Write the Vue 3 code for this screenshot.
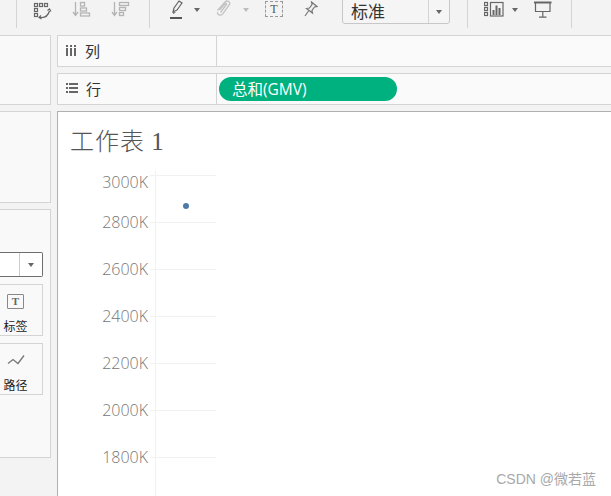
<script setup>
const ticks = ['3000K', '2800K', '2600K', '2400K', '2200K', '2000K', '1800K']
</script>

<template>
  <div class="page">
    <header class="toolbar">
      <span class="sep" style="left:16px"></span>
      <svg class="ic" style="left:33px;top:1px" width="19" height="19" viewBox="0 0 19 19" fill="none" stroke="#666" stroke-width="1.2">
        <rect x="1.5" y="2.5" width="3" height="3" /><rect x="6.5" y="2.5" width="3" height="3" /><rect x="11.5" y="2.5" width="3" height="3" />
        <rect x="1.5" y="7.5" width="3" height="3" /><rect x="1.5" y="12.5" width="3" height="3" />
        <path d="M7 16.5c4 .5 8-1.500 9.500-6.500" stroke-width="1.300" />
        <path d="M14.500 9.500l2-1.500 1.500 2.500M8 14.500l-2 2 2.500 1.500" />
      </svg>
      <svg class="ic" style="left:72px;top:1px" width="20" height="16" viewBox="0 0 20 16" fill="none" stroke="#b4b4b4" stroke-width="1.300">
        <path d="M3.500 1v13M1 11l2.500 3.500L6 11" /><rect x="8.500" y="1.500" width="4" height="3.500" /><rect x="8.500" y="7" width="6" height="3" /><rect x="8.500" y="12" width="9" height="3" />
      </svg>
      <svg class="ic" style="left:111px;top:1px" width="20" height="16" viewBox="0 0 20 16" fill="none" stroke="#b4b4b4" stroke-width="1.300">
        <path d="M3.500 1v13M1 11l2.500 3.500L6 11" /><rect x="8.500" y="1.500" width="9" height="3" /><rect x="8.500" y="6.500" width="6" height="3" /><rect x="8.500" y="11.500" width="4" height="3" />
      </svg>
      <span class="sep" style="left:149px"></span>
      <svg class="ic" style="left:170px;top:0" width="14" height="19" viewBox="0 0 14 19" fill="none">
        <path d="M3 12l1-4 5-7 3 2-5 7z" stroke="#666" stroke-width="1.200" /><path d="M3 12l3 .5-3 1.500z" fill="#666" />
        <rect x="0" y="17" width="12" height="2" fill="#555" />
      </svg>
      <span class="caret" style="left:194px;top:8px"></span>
      <svg class="ic" style="left:216px;top:0" width="17" height="17" viewBox="0 0 17 17" fill="none" stroke="#c2c2c2" stroke-width="1.300">
        <path d="M1.500 10.500L9 2c2-2 5.500-.5 4.500 2.500L7 13.500c-1.500 2.500-6 2-5.500-1.500" />
        <path d="M4.500 12.500l6-8c.5-1-.5-1.500-1.200-1L3.500 10" />
      </svg>
      <span class="caret light" style="left:243px;top:8px"></span>
      <div class="tbox" style="left:265px;top:1px">T</div>
      <svg class="ic" style="left:304px;top:1px" width="14" height="16" viewBox="0 0 14 16" fill="none" stroke="#777" stroke-width="1.200">
        <path d="M7.500 1l5.500 4.500-2.500.5-2.500 3.500.5 2.500-6-4.500 3-.5 2.500-3.500zM4.500 10L1 15" />
      </svg>
      <div class="select">
        <span class="sel-text">标准</span>
        <span class="sel-btn"><i class="caret static"></i></span>
      </div>
      <span class="sep" style="left:467px"></span>
      <svg class="ic" style="left:484px;top:1px" width="20" height="16" viewBox="0 0 20 16" fill="none" stroke="#666" stroke-width="1.200">
        <rect x=".5" y="1.500" width="3" height="3" /><rect x=".5" y="6.500" width="3" height="3" /><rect x=".5" y="11.500" width="3" height="3" />
        <rect x="6.500" y="1.500" width="12.500" height="13.500" />
        <path d="M9.500 14V9M12.500 14V4.500M15.500 14V7" stroke-width="2" />
      </svg>
      <span class="caret" style="left:512px;top:8px"></span>
      <svg class="ic" style="left:534px;top:1px" width="18" height="17" viewBox="0 0 18 17" fill="none" stroke="#666" stroke-width="1.200">
        <path d="M0 1.500h17.500" stroke-width="2" /><path d="M1.500 2v8.500h14.500V2M8.800 10.500v5M5 16.200h7.500" />
      </svg>
      <span class="sep" style="left:571px"></span>
    </header>

    <div class="body">
      <aside class="side">
        <div class="card first"></div>
        <div class="card second"></div>
        <div class="card third">
          <div class="combo"><span class="combo-btn"><i class="caret static"></i></span></div>
          <div class="mark">
            <div class="t-icon">T</div>
            <span>标签</span>
          </div>
          <div class="mark">
            <svg width="18" height="12" viewBox="0 0 18 12" fill="none" stroke="#777" stroke-width="1.300">
              <path d="M1 9l5-4 5 4 6-8" />
            </svg>
            <span>路径</span>
          </div>
        </div>
      </aside>

      <main class="main">
        <div class="shelf">
          <div class="shelf-label">
            <svg width="11" height="11" viewBox="0 0 11 11" fill="#666"><rect x="0" y="3" width="2" height="8" /><rect x="4" y="3" width="2" height="8" /><rect x="8" y="3" width="2" height="8" /><rect x="0" y="0" width="2" height="2" /><rect x="4" y="0" width="2" height="2" /><rect x="8" y="0" width="2" height="2" /></svg>
            <span>列</span>
          </div>
          <div class="shelf-drop"></div>
        </div>
        <div class="shelf">
          <div class="shelf-label">
            <svg width="12" height="11" viewBox="0 0 12 11" fill="#666"><rect x="0" y="0" width="2" height="2" /><rect x="3" y="0" width="9" height="2" /><rect x="0" y="4" width="2" height="2" /><rect x="3" y="4" width="9" height="2" /><rect x="0" y="8" width="2" height="2" /><rect x="3" y="8" width="9" height="2" /></svg>
            <span>行</span>
          </div>
          <div class="shelf-drop"><div class="pill">总和(GMV)</div></div>
        </div>

        <section class="sheet">
          <h1 class="title">工作表 <span class="num">1</span></h1>
          <div class="chart">
            <div v-for="t in ticks" :key="t" class="tick">
              <span class="tick-label">{{ t }}</span>
              <span class="tick-line"></span>
            </div>
            <span class="axis"></span>
            <span class="dot"></span>
          </div>
          <div class="mark-wm">CSDN @微若蓝</div>
        </section>
      </main>
    </div>
  </div>
</template>

<style>
html, body { margin: 0; padding: 0; background: #f3f3f3; overflow: hidden; }
</style>

<style scoped>
.page {
  width: 611px;
  height: 496px;
  overflow: hidden;
  background: #f3f3f3;
  font-family: "Open Sans", "Noto Sans CJK SC", sans-serif;
  color: #333;
}
.toolbar { position: relative; height: 35px; }
.sep { position: absolute; top: 0; width: 1px; height: 28px; background: #d4d4d4; }
.ic { position: absolute; }
.caret {
  position: absolute;
  width: 0; height: 0;
  border-left: 3.500px solid transparent;
  border-right: 3.500px solid transparent;
  border-top: 4px solid #666;
}
.caret.light { border-top-color: #bdbdbd; }
.caret.static { position: static; display: block; }
.tbox {
  position: absolute;
  width: 16px; height: 14px;
  border: 1px dashed #999;
  font: 12px/14px "Liberation Serif", serif;
  color: #555;
  text-align: center;
}
.select {
  position: absolute;
  left: 342px; top: -4px;
  width: 106px; height: 26px;
  display: flex;
  border: 1px solid #c8c8c8;
  border-radius: 3px;
  background: #f5f5f5;
}
.sel-text { flex: 1; padding-left: 8px; font-size: 17px; line-height: 29px; color: #333; }
.sel-btn { width: 21px; border-left: 1px solid #d4d4d4; display: flex; align-items: center; justify-content: center; padding-top: 4px; box-sizing: border-box; }

.body { display: flex; gap: 6px; height: 461px; }
.side { width: 51px; flex: none; display: flex; flex-direction: column; gap: 6px; }
.card { background: #f9f9f9; border: 1px solid #d4d4d4; border-left: none; box-sizing: border-box; }
.first { height: 70px; }
.second { height: 92px; }
.third {
  height: 249px;
  padding: 42px 7px 0 0;
  display: flex;
  flex-direction: column;
  align-items: stretch;
  gap: 7px;
}
.combo {
  height: 25px;
  flex: none;
  box-sizing: border-box;
  border: 1px solid #6e6e6e;
  border-left: none;
  border-radius: 0 2px 2px 0;
  background: #fff;
  display: flex;
  justify-content: flex-end;
}
.combo-btn { width: 22px; border-left: 1px solid #ccc; display: flex; align-items: center; justify-content: center; }
.mark {
  height: 52px;
  flex: none;
  margin-left: -11px;
  box-sizing: border-box;
  border: 1px solid #d4d4d4;
  border-left: none;
  padding: 9px 0 0;
  display: flex;
  flex-direction: column;
  align-items: center;
  font-size: 12px;
  color: #222;
}
.mark span { line-height: 16px; margin-top: auto; }
.mark svg { height: 15px; }
.t-icon {
  width: 15px; height: 13px;
  border: 1.500px solid #888;
  border-radius: 1px;
  font: bold 11px/13px "Liberation Serif", serif;
  color: #666;
  text-align: center;
}

.main { flex: 1; min-width: 0; display: flex; flex-direction: column; gap: 6px; }
.shelf { height: 32px; flex: none; display: flex; background: #fafafa; border: 1px solid #d4d4d4; border-right: none; box-sizing: border-box; }
.shelf-label { width: 159px; flex: none; box-sizing: border-box; border-right: 1px solid #d4d4d4; display: flex; align-items: center; gap: 8px; padding: 0 0 2px 8px; font-size: 15px; color: #333; }
.shelf-drop { flex: 1; display: flex; align-items: center; padding-left: 2px; }
.pill {
  width: 178px; height: 24px;
  border-radius: 12px;
  background: #00b180;
  color: #fff;
  font-size: 15.500px;
  line-height: 24px;
  padding-left: 13px;
  box-sizing: border-box;
}
.sheet {
  flex: 1;
  position: relative;
  background: #fff;
  border: 1px solid #b0b0b0;
  border-right: none;
  border-bottom: none;
  padding: 11px 0 0 12px;
  box-sizing: border-box;
}
.title { margin: 0; font-weight: 300; font-size: 24px; line-height: 34px; color: #555; letter-spacing: 1px; font-family: "Noto Sans CJK SC", sans-serif; }
.num { font-family: "Liberation Serif", serif; font-size: 25px; }
.chart { position: relative; margin: 16px 0 0 -12px; }
.tick { height: 47px; display: flex; align-items: flex-start; }
.tick-label { width: 90px; text-align: right; font-size: 16px; font-weight: 300; line-height: 14px; margin-top: -7px; color: #777; }
.tick:first-child .tick-label { margin-top: 0; }
.tick-line { width: 66px; height: 1px; background: #f1f1f1; margin-left: 2px; }
.axis { position: absolute; left: 97px; top: -4px; width: 1px; height: 340px; background: #f1f1f1; }
.dot { position: absolute; left: 125px; top: 28px; width: 6px; height: 6px; border-radius: 50%; background: #4e79a7; }
.mark-wm { position: absolute; right: 15px; top: 356px; font-size: 14px; color: #a8a8a8; font-family: "Liberation Sans", "Noto Sans CJK SC", sans-serif; }
</style>
